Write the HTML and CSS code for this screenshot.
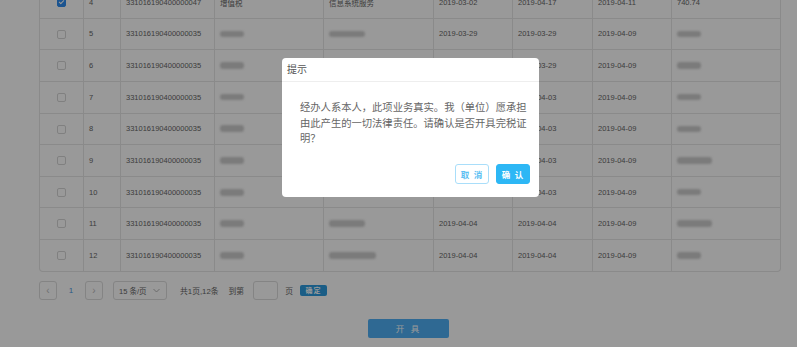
FILE: index.html
```html
<!DOCTYPE html>
<html lang="zh-CN">
<head>
  <meta charset="UTF-8" />
  <title>开具完税证明</title>
  <link rel="stylesheet" href="styles.css">
</head>
<body>
  <div class="page">
    <div class="grid">
      <table>
        <colgroup>
          <col style="width:44px"><col style="width:37px"><col style="width:94px"><col style="width:109px"><col style="width:110px"><col style="width:79px"><col style="width:80px"><col style="width:79px"><col>
        </colgroup>
        <tr>
          <td class="chk"><span class="box on"></span></td><td>4</td><td>331016190400000047</td><td>增值税</td><td>信息系统服务</td><td>2019-03-02</td><td>2019-04-17</td><td>2019-04-11</td><td>740.74</td>
        </tr>
        <tr>
          <td class="chk"><span class="box"></span></td><td>5</td><td>331016190400000035</td><td><i class="blur"></i></td><td><i class="blur wide"></i></td><td>2019-03-29</td><td>2019-03-29</td><td>2019-04-09</td><td><i class="blur"></i></td>
        </tr>
        <tr>
          <td class="chk"><span class="box"></span></td><td>6</td><td>331016190400000035</td><td><i class="blur tall"></i></td><td></td><td>2019-03-29</td><td>2019-03-29</td><td>2019-04-09</td><td><i class="blur tall"></i></td>
        </tr>
        <tr>
          <td class="chk"><span class="box"></span></td><td>7</td><td>331016190400000035</td><td><i class="blur"></i></td><td></td><td>2019-04-03</td><td>2019-04-03</td><td>2019-04-09</td><td><i class="blur"></i></td>
        </tr>
        <tr>
          <td class="chk"><span class="box"></span></td><td>8</td><td>331016190400000035</td><td><i class="blur tall"></i></td><td></td><td>2019-04-03</td><td>2019-04-03</td><td>2019-04-09</td><td><i class="blur"></i></td>
        </tr>
        <tr>
          <td class="chk"><span class="box"></span></td><td>9</td><td>331016190400000035</td><td><i class="blur tall"></i></td><td></td><td>2019-04-03</td><td>2019-04-03</td><td>2019-04-09</td><td><i class="blur long tall"></i></td>
        </tr>
        <tr>
          <td class="chk"><span class="box"></span></td><td>10</td><td>331016190400000035</td><td><i class="blur tall"></i></td><td></td><td>2019-04-03</td><td>2019-04-03</td><td>2019-04-09</td><td><i class="blur"></i></td>
        </tr>
        <tr>
          <td class="chk"><span class="box"></span></td><td>11</td><td>331016190400000035</td><td><i class="blur tall"></i></td><td><i class="blur wide tall"></i></td><td>2019-04-04</td><td>2019-04-04</td><td>2019-04-09</td><td><i class="blur long tall"></i></td>
        </tr>
        <tr>
          <td class="chk"><span class="box"></span></td><td>12</td><td>331016190400000035</td><td><i class="blur tall"></i></td><td><i class="blur wider tall"></i></td><td>2019-04-04</td><td>2019-04-04</td><td>2019-04-09</td><td><i class="blur tall"></i></td>
        </tr>
      </table>
    </div>

    <div class="pager">
      <span class="pbtn">&lsaquo;</span>
      <span class="pnum">1</span>
      <span class="pbtn">&rsaquo;</span>
      <span class="psize">15 条/页 <svg width="7" height="5" viewBox="0 0 7 5"><path d="M0.5 1 L3.5 4 L6.5 1" fill="none" stroke="#aaa" stroke-width="0.9"/></svg></span>
      <span class="ptext">共1页,12条</span>
      <span class="ptext goto">到第</span>
      <span class="pinput"></span>
      <span class="ptext unit">页</span>
      <span class="pgo">确定</span>
    </div>

    <div class="actions">
      <button class="issue">开 具</button>
    </div>
  </div>

  <div class="mask">
    <div class="dialog">
      <div class="dialog-head">提示</div>
      <div class="dialog-body">经办人系本人，此项业务真实。我（单位）愿承担由此产生的一切法律责任。请确认是否开具完税证明？</div>
      <div class="dialog-foot">
        <button class="btn-cancel">取 消</button>
        <button class="btn-ok">确 认</button>
      </div>
    </div>
  </div>
</body>
</html>
```

FILE: styles.css
```css
body {
  margin: 0;
  font-family: "Liberation Sans", "Noto Sans CJK SC", sans-serif;
  background: #fff;
  color: #666;
  overflow: hidden;
}

.page {
  padding-left: 39px;
  width: 742px;
  margin-top: -14px;
}

.grid {
  border: 1px solid #e6e6e6;
  border-top: none;
  border-radius: 0 0 4px 4px;
  overflow: hidden;
}

table {
  width: 100%;
  table-layout: fixed;
  border-collapse: separate;
  border-spacing: 0;
  font-size: 7.5px;
}

td {
  height: 31.63px;
  box-sizing: border-box;
  padding: 0 4px 0 5px;
  border-top: 1px solid #e6e6e6;
  border-right: 1px solid #e6e6e6;
  white-space: nowrap;
  overflow: hidden;
  vertical-align: middle;
}

td:last-child {
  border-right: none;
}

td.chk {
  text-align: center;
  padding: 0;
}

.box {
  display: inline-block;
  width: 9px;
  height: 9px;
  box-sizing: border-box;
  border: 1px solid #d6d6d6;
  border-radius: 2px;
  vertical-align: middle;
  position: relative;
}

.box.on {
  background: #2d8cf0;
  border-color: #2d8cf0;
}

.box.on::after {
  content: "";
  position: absolute;
  left: 2px;
  top: 0px;
  width: 2px;
  height: 4px;
  border: solid #fff;
  border-width: 0 1px 1px 0;
  transform: rotate(45deg);
}

.blur {
  display: block;
  width: 24px;
  height: 6px;
  background: #cdcdcd;
  border-radius: 3px;
  filter: blur(1px);
}

.blur.tall { height: 7px; }
.blur.wide { width: 36px; }
.blur.wider { width: 47px; }
.blur.long { width: 35px; }

.pager {
  display: flex;
  align-items: center;
  height: 19px;
  margin-top: 9px;
  font-size: 7.5px;
  color: #666;
}

.pbtn {
  width: 18px;
  height: 19px;
  box-sizing: border-box;
  border: 1px solid #dcdcdc;
  border-radius: 3px;
  display: flex;
  align-items: center;
  justify-content: center;
  color: #bbb;
  font-size: 10px;
}

.pnum {
  width: 28px;
  text-align: center;
  color: #4d96e0;
  font-size: 8px;
}

.psize {
  margin-left: 10px;
  width: 54px;
  height: 19px;
  box-sizing: border-box;
  border: 1px solid #dcdcdc;
  border-radius: 3px;
  display: flex;
  align-items: center;
  justify-content: space-between;
  padding: 0 6px 0 5px;
}

.ptext {
  margin-left: 13px;
  font-size: 7.8px;
}

.ptext.goto {
  margin-left: 10px;
}

.pinput {
  margin-left: 9px;
  width: 25px;
  height: 19px;
  box-sizing: border-box;
  border: 1px solid #dcdcdc;
  border-radius: 3px;
}

.ptext.unit {
  margin-left: 7px;
}

.pgo {
  margin-left: 7px;
  width: 27px;
  height: 11px;
  border-radius: 2px;
  background: #2c9ce0;
  color: #fff;
  font-size: 7px;
  font-weight: bold;
  line-height: 11px;
  text-align: center;
  letter-spacing: 1px;
}

.actions {
  display: flex;
  justify-content: center;
  margin-top: 19px;
  padding-right: 3px;
}

.issue {
  width: 81px;
  height: 19px;
  border: none;
  border-radius: 2px;
  background: #4fb0f6;
  color: #fff;
  font-family: inherit;
  font-size: 8.5px;
  letter-spacing: 2px;
  padding: 0;
}

.mask {
  position: fixed;
  inset: 0;
  background: rgba(0, 0, 0, 0.4);
}

.dialog {
  position: absolute;
  left: 282px;
  top: 58px;
  width: 257px;
  height: 139px;
  background: #fff;
  border-radius: 4px;
  display: flex;
  flex-direction: column;
}

.dialog-head {
  height: 24px;
  box-sizing: border-box;
  border-bottom: 1px solid #eee;
  padding-left: 5px;
  font-size: 10px;
  line-height: 24px;
  color: #555;
}

.dialog-body {
  padding: 18px 0 0 18px;
  width: 229px;
  font-size: 10.3px;
  line-height: 15.5px;
  color: #666;
  flex: 1;
}

.dialog-foot {
  display: flex;
  justify-content: flex-end;
  gap: 7px;
  padding: 0 9px 13px 0;
}

.dialog-foot button {
  width: 34px;
  height: 20px;
  border-radius: 3px;
  font-family: inherit;
  font-size: 8.5px;
  font-weight: bold;
  padding: 0;
  letter-spacing: 1px;
}

.btn-cancel {
  background: #fff;
  border: 1px solid #a9defa;
  color: #5cc0f2;
}

.btn-ok {
  background: #2db7f5;
  border: 1px solid #2db7f5;
  color: #fff;
}
```
